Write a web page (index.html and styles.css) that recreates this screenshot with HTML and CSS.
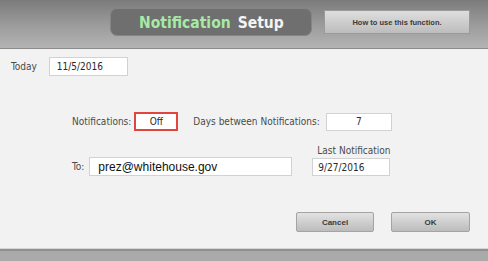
FILE: index.html
```html
<!DOCTYPE html>
<html>
<head>
<meta charset="utf-8">
<link rel="stylesheet" href="styles.css">
</head>
<body>
<div class="window">
  <header class="header">
    <div class="title"><span class="t-green">Notification</span><span class="t-white">Setup</span></div>
    <div class="help-btn">How to use this function.</div>
  </header>
  <main class="content">
    <div class="row-today">
      <span class="label">Today</span>
      <div class="field today-field">11/5/2016</div>
    </div>
    <div class="row-notif">
      <span class="label">Notifications:</span>
      <div class="field off-field">Off</div>
      <span class="label days-label">Days between Notifications:</span>
      <div class="field days-field">7</div>
    </div>
    <div class="row-to">
      <div class="to-group">
        <span class="label">To:</span>
        <div class="field to-field">prez@whitehouse.gov</div>
      </div>
      <div class="last-group">
        <span class="label last-label">Last Notification</span>
        <div class="field last-field">9/27/2016</div>
      </div>
    </div>
    <div class="row-buttons">
      <div class="btn cancel-btn">Cancel</div>
      <div class="btn ok-btn">OK</div>
    </div>
  </main>
  <footer class="footer"></footer>
</div>
</body>
</html>
```
FILE: styles.css
```css
* { box-sizing: border-box; }
html, body { margin: 0; padding: 0; }
body {
  width: 488px;
  height: 261px;
  overflow: hidden;
  font-family: "DejaVu Sans Condensed", "DejaVu Sans", sans-serif;
  background: #f2f2f2;
}
.window { width: 488px; height: 261px; display: flex; flex-direction: column; }
.header {
  height: 49px;
  background: linear-gradient(to bottom, #7b7b7b 0%, #9a9a9a 50%, #b4b4b4 100%);
  border-bottom: 1px solid #8a8a8a;
  display: flex;
  align-items: flex-start;
  padding-top: 8px;
  padding-left: 110px;
}
.title {
  width: 202px;
  height: 28px;
  border-radius: 7px;
  background: #6f6f6f;
  border: 1px solid #858585;
  display: flex;
  align-items: center;
  justify-content: flex-start;
  gap: 7px;
  font-family: "DejaVu Sans Condensed", "DejaVu Sans", sans-serif;
  font-weight: bold;
  font-size: 15.5px;
  padding-left: 28px;
  padding-top: 1px;
}
.t-green { color: #a6eaa6; }
.t-white { color: #f4f4f4; }
.help-btn {
  margin-left: 12px;
  margin-top: 2px;
  width: 146px;
  height: 24px;
  background: linear-gradient(to bottom, #dedede, #bdbdbd);
  border: 1px solid #9a9a9a;
  display: flex;
  align-items: center;
  justify-content: center;
  font-family: "Liberation Sans", Arial, sans-serif;
  font-weight: bold;
  font-size: 7.5px;
  color: #3a3a3a;
}
.content {
  flex: 1;
  background: #f2f2f2;
}
.label { font-size: 10px; color: #4a4a4a; }
.field {
  background: #fff;
  border: 1px solid #d2d2d2;
  height: 19px;
  font-size: 10px;
  color: #2a2a2a;
  display: flex;
  align-items: center;
  padding-left: 7px;
}
.row-today {
  display: flex;
  align-items: center;
  padding-left: 11px;
  margin-top: 8px;
}
.today-field { margin-left: 12px; width: 79px; }
.row-notif {
  display: flex;
  align-items: center;
  padding-left: 72px;
  margin-top: 36px;
}
.off-field {
  margin-left: 3px;
  width: 44px;
  border: 2px solid #e0453e;
  justify-content: center;
  padding-left: 0;
}
.days-label { margin-left: 15px; }
.days-field { margin-left: 6px; width: 66px; height: 18px; justify-content: center; padding-left: 0; }
.row-to {
  display: flex;
  align-items: flex-end;
  padding-left: 72px;
  margin-top: 14px;
}
.to-group { display: flex; align-items: center; }
.to-field {
  margin-left: 5px;
  width: 203px;
  font-family: "Liberation Sans", Arial, sans-serif;
  font-size: 12px;
  color: #111;
  padding-left: 8px;
}
.last-group { display: flex; flex-direction: column; margin-left: 20px; }
.last-label { margin-left: 5px; margin-bottom: 2px; }
.last-field { width: 78px; height: 18px; padding-left: 5px; }
.row-buttons {
  display: flex;
  padding-left: 296px;
  margin-top: 36px;
  gap: 17px;
}
.btn {
  width: 78px;
  height: 20px;
  background: linear-gradient(to bottom, #e2e2e2, #bcbcbc);
  border: 1px solid #a4a4a4;
  border-radius: 2px;
  display: flex;
  align-items: center;
  justify-content: center;
  font-family: "Liberation Sans", Arial, sans-serif;
  font-weight: bold;
  font-size: 8px;
  color: #3a3a3a;
}
.ok-btn { width: 79px; }
.footer {
  height: 12px;
  background: #aaaaaa;
  border-top: 2px solid #8f8f8f;
  box-shadow: 0 -1px 0 #d6d6d6;
}
```
